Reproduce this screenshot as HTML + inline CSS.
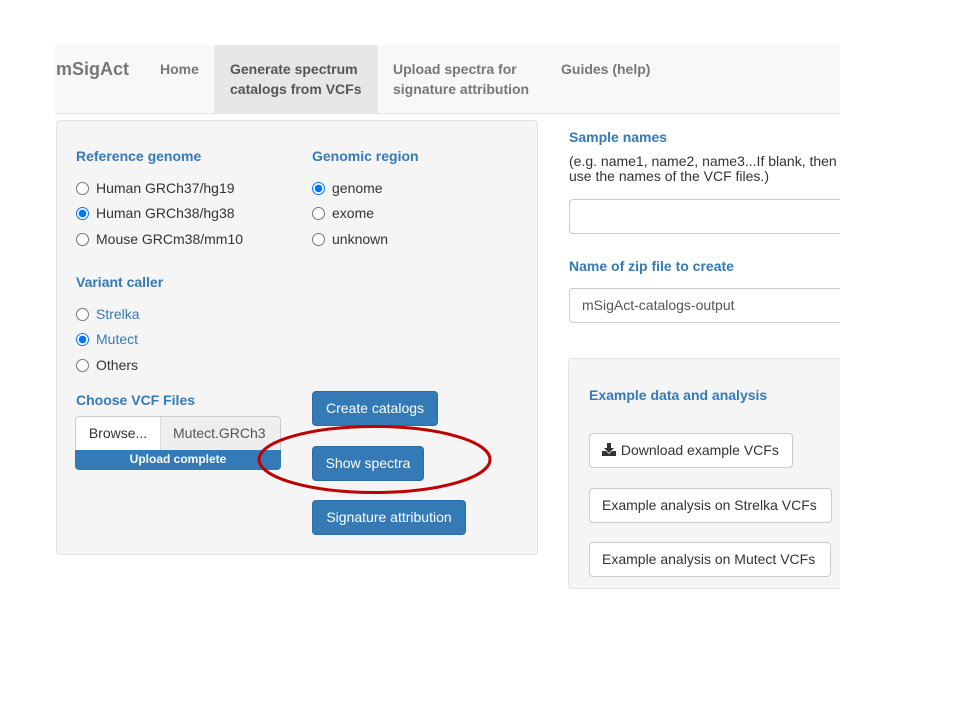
<!DOCTYPE html>
<html><head><style>
*{box-sizing:border-box;margin:0;padding:0}
body{width:960px;height:720px;background:#fff;position:relative;overflow:hidden;font-family:"Liberation Sans",Arial,sans-serif;font-size:14px;color:#333}
.a{position:absolute;white-space:nowrap}
.nav{position:absolute;left:55px;top:45px;width:785px;height:69px;background:#f8f8f8;border-bottom:1px solid #e7e7e7}
.nt{position:absolute;font-weight:bold;color:#777;line-height:20px;font-size:14px}
.lbl{font-weight:bold;color:#337ab7;font-size:14px;line-height:16px}
.r{position:absolute;width:13px;height:13px;border-radius:50%;border:1px solid #767676;background:#fff}
.r.on{border:1px solid #0075ff;background:radial-gradient(circle,#0075ff 0 3.5px,#fff 4px)}
.rt{position:absolute;line-height:16px;font-size:14px}
.btn{position:absolute;background:#337ab7;border:1px solid #2e6da4;border-radius:4px;color:#fff;font-size:14px;line-height:32px;text-align:center}
.wb{position:absolute;background:#fff;border:1px solid #ccc;border-radius:4px;color:#333;font-size:14px;line-height:32px;padding-left:12px}
.inp{position:absolute;background:#fff;border:1px solid #ccc;border-radius:4px 0 0 4px;border-right:none}
</style></head><body>
<div class="nav">
 <div class="a" style="left:1px;top:13px;font-size:18px;font-weight:bold;color:#777;line-height:22px">mSigAct</div>
 <div class="nt" style="left:105px;top:14px">Home</div>
 <div style="position:absolute;left:159px;top:0;width:164px;height:68px;background:#e7e7e7"></div>
 <div class="nt" style="left:175px;top:14px;color:#555">Generate spectrum<br>catalogs from VCFs</div>
 <div class="nt" style="left:338px;top:14px">Upload spectra for<br>signature attribution</div>
 <div class="nt" style="left:506px;top:14px">Guides (help)</div>
</div>

<div style="position:absolute;left:56px;top:120px;width:482px;height:435px;background:#f5f5f5;border:1px solid #e3e3e3;border-radius:4px"></div>
<div class="a lbl" style="left:76px;top:148px">Reference genome</div>
<div class="r" style="left:76px;top:182px"></div><div class="rt" style="left:96px;top:180px">Human GRCh37/hg19</div>
<div class="r on" style="left:76px;top:207px"></div><div class="rt" style="left:96px;top:205px">Human GRCh38/hg38</div>
<div class="r" style="left:76px;top:233px"></div><div class="rt" style="left:96px;top:231px">Mouse GRCm38/mm10</div>
<div class="a lbl" style="left:312px;top:148px">Genomic region</div>
<div class="r on" style="left:312px;top:182px"></div><div class="rt" style="left:332px;top:180px">genome</div>
<div class="r" style="left:312px;top:207px"></div><div class="rt" style="left:332px;top:205px">exome</div>
<div class="r" style="left:312px;top:233px"></div><div class="rt" style="left:332px;top:231px">unknown</div>
<div class="a lbl" style="left:76px;top:274px">Variant caller</div>
<div class="r" style="left:76px;top:308px"></div><div class="rt" style="left:96px;top:306px;color:#337ab7">Strelka</div>
<div class="r on" style="left:76px;top:333px"></div><div class="rt" style="left:96px;top:331px;color:#337ab7">Mutect</div>
<div class="r" style="left:76px;top:359px"></div><div class="rt" style="left:96px;top:357px">Others</div>
<div class="a lbl" style="left:76px;top:392px">Choose VCF Files</div>
<div style="position:absolute;left:75px;top:416px;width:206px;height:35px;border:1px solid #ccc;border-radius:4px 4px 0 0;background:#eee;overflow:hidden">
 <div style="position:absolute;left:0;top:0;width:85px;height:34px;background:#fff;border-right:1px solid #ddd;line-height:33px;text-align:center">Browse...</div>
 <div class="a" style="left:97px;top:0;line-height:33px;color:#555">Mutect.GRCh3</div>
</div>
<div style="position:absolute;left:75px;top:450px;width:206px;height:20px;background:#337ab7;border-radius:0 0 4px 4px;color:#fff;font-size:12px;font-weight:bold;text-align:center;line-height:19px">Upload complete</div>
<div class="btn" style="left:312px;top:391px;width:126px;height:35px">Create catalogs</div>
<div class="btn" style="left:312px;top:446px;width:112px;height:35px">Show spectra</div>
<div class="btn" style="left:312px;top:500px;width:154px;height:35px">Signature attribution</div>
<svg style="position:absolute;left:0;top:0" width="960" height="720"><ellipse cx="374.5" cy="459.5" rx="115.5" ry="33" fill="none" stroke="#c00000" stroke-width="3"/></svg>

<div class="a lbl" style="left:569px;top:129px">Sample names</div>
<div class="a" style="left:569px;top:154px;line-height:15px;color:#333">(e.g. name1, name2, name3...If blank, then<br>use the names of the VCF files.)</div>
<div class="inp" style="left:569px;top:199px;width:271px;height:35px"></div>
<div class="a lbl" style="left:569px;top:258px">Name of zip file to create</div>
<div class="inp" style="left:569px;top:288px;width:271px;height:35px;line-height:33px;padding-left:12px;color:#555">mSigAct-catalogs-output</div>
<div style="position:absolute;left:568px;top:358px;width:300px;height:231px;background:#f5f5f5;border:1px solid #e3e3e3;border-radius:4px"></div>
<div style="position:absolute;left:840px;top:0;width:120px;height:720px;background:#fff"></div>
<div class="a lbl" style="left:589px;top:387px">Example data and analysis</div>
<div class="wb" style="left:589px;top:433px;width:204px;height:35px"><svg width="15" height="13" viewBox="0 0 15 13" style="vertical-align:-1px"><path d="M5 0h4v5h3l-5 5-5-5h3z" fill="#333"/><path d="M0 8h4l3 3 3-3h4v5H0z" fill="#333"/></svg> Download example VCFs</div>
<div class="wb" style="left:589px;top:488px;width:243px;height:35px">Example analysis on Strelka VCFs</div>
<div class="wb" style="left:589px;top:542px;width:242px;height:35px">Example analysis on Mutect VCFs</div>
</body></html>
